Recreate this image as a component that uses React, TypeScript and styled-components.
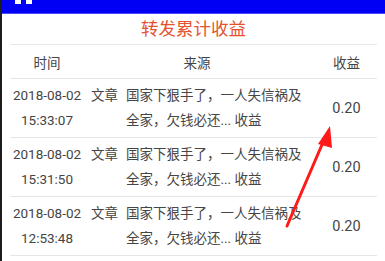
import React from 'react';
import styled, { createGlobalStyle } from 'styled-components';

const GlobalStyle = createGlobalStyle`
  html, body {
    margin: 0;
    padding: 0;
    background: #ffffff;
  }
  body {
    font-family: Roboto, "Noto Sans CJK SC", sans-serif;
  }
`;

const Screen = styled.div`
  position: relative;
  display: flex;
  width: 385px;
  height: 261px;
  overflow: hidden;
  background: #ffffff;
`;

const Edge = styled.div`
  width: 2px;
  flex: none;
  background: #1c1c1c;
`;

const Page = styled.div`
  flex: 1;
  display: flex;
  flex-direction: column;
`;

const StatusBar = styled.div`
  height: 14px;
  display: flex;
  gap: 5px;
  padding-left: 13px;
  background: #0000f5;
  border-bottom: 1px solid #4a4aff;
  box-sizing: border-box;
`;

const StatusDot = styled.span`
  width: 6px;
  height: 4px;
  background: #ffffff;
`;

const Title = styled.h1`
  margin: 0 8px;
  height: 30px;
  line-height: 31px;
  text-align: center;
  font-size: 17.5px;
  font-weight: 400;
  color: #e5532e;
  border-bottom: 1px solid #e8e8e8;
`;

const Table = styled.div`
  margin: 0 8px;
  display: flex;
  flex-direction: column;
  color: #454545;
  font-size: 13.5px;
`;

const Row = styled.div<{ $head?: boolean }>`
  display: grid;
  grid-template-columns: 74px 226px 1fr;
  align-items: center;
  height: ${p => (p.$head ? 33 : 58)}px;
  border-bottom: 1px solid #e6e6e6;
`;

const TimeCell = styled.div`
  text-align: center;
  line-height: 25px;
`;

const SourceCell = styled.div`
  display: flex;
  gap: 8px;
  padding-left: 7px;
  line-height: 25px;
`;

const HeadCell = styled.div`
  text-align: center;
`;

const Kind = styled.span`
  flex: none;
`;

const Headline = styled.span`
  width: 176px;
`;

const Amount = styled.div<{ $value?: boolean }>`
  text-align: center;
  padding-left: 6px;
  font-size: ${p => (p.$value ? 14.5 : 13.5)}px;
`;

const Arrow = styled.svg`
  position: absolute;
  left: 0;
  top: 0;
  pointer-events: none;
`;

const rows = [
  { date: '2018-08-02', time: '15:33:07' },
  { date: '2018-08-02', time: '15:31:50' },
  { date: '2018-08-02', time: '12:53:48' },
];

export default function App() {
  return (
    <Screen>
      <GlobalStyle />
      <Edge />
      <Page>
        <StatusBar>
          <StatusDot />
          <StatusDot />
        </StatusBar>
        <Title>转发累计收益</Title>
        <Table>
          <Row $head>
            <HeadCell>时间</HeadCell>
            <HeadCell>来源</HeadCell>
            <Amount>收益</Amount>
          </Row>
          {rows.map(r => (
            <Row key={r.time}>
              <TimeCell>
                {r.date}
                <br />
                {r.time}
              </TimeCell>
              <SourceCell>
                <Kind>文章</Kind>
                <Headline>国家下狠手了，一人失信祸及全家，欠钱必还... 收益</Headline>
              </SourceCell>
              <Amount $value>0.20</Amount>
            </Row>
          ))}
        </Table>
      </Page>
      <Arrow width="385" height="261" viewBox="0 0 385 261">
        <line x1="287" y1="226" x2="324" y2="140" stroke="#ff1a1a" strokeWidth="3" strokeLinecap="round" />
        <polygon points="330,126 318,144 332,148" fill="#ff1a1a" />
      </Arrow>
    </Screen>
  );
}
